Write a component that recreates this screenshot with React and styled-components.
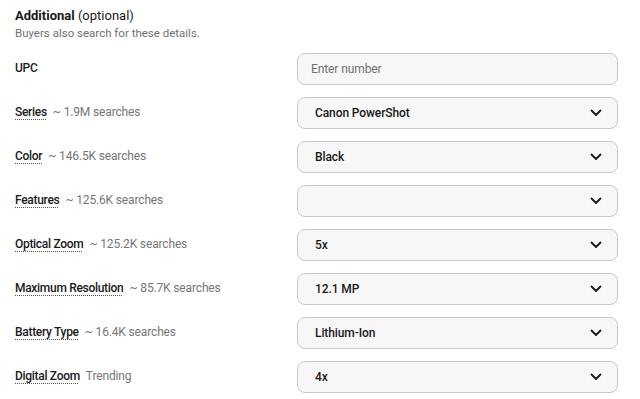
import React from "react";
import styled, { createGlobalStyle } from "styled-components";

const Global = createGlobalStyle`
  html, body { margin: 0; padding: 0; background: #fff; }
  body { font-family: Roboto, Inter, "Liberation Sans", sans-serif; color: #191919; }
`;

const Page = styled.div`
  width: 640px;
  padding: 8px 22px 0 15px;
  box-sizing: border-box;
`;

const Title = styled.h2`
  margin: 0;
  font-size: 13px;
  line-height: 16px;
  font-weight: 700;
  color: #191919;
  span { font-weight: 400; }
`;

const Subtitle = styled.p`
  margin: 2px 0 0;
  font-size: 11.5px;
  line-height: 14px;
  color: #707070;
`;

const List = styled.div`
  margin-top: 13px;
  display: flex;
  flex-direction: column;
  gap: 12px;
`;

const Row = styled.div`
  display: grid;
  grid-template-columns: 1fr 321px;
  align-items: center;
`;

const LabelWrap = styled.div`
  display: flex;
  align-items: baseline;
  gap: 6px;
  margin-top: -2px;
`;

const Label = styled.span`
  font-size: 12px;
  font-weight: 500;
  letter-spacing: -0.3px;
  color: #191919;
  text-decoration: ${(p) => (p.$dotted ? "underline dotted #555" : "none")};
  text-underline-offset: 3px;
  text-decoration-thickness: 1px;
`;

const Meta = styled.span`
  font-size: 12px;
  color: #767676;
  letter-spacing: -0.15px;
`;

const Field = styled.div`
  height: 32px;
  box-sizing: border-box;
  border: 1px solid #c8c8c8;
  border-radius: 8px;
  background: #f7f7f7;
  display: flex;
  align-items: center;
  justify-content: space-between;
  padding: 0 15px 0 ${(p) => (p.$input ? "13px" : "17px")};
  font-size: 12px;
  font-weight: 500;
  letter-spacing: -0.1px;
  color: ${(p) => (p.$placeholder ? "#707070" : "#191919")};
  ${(p) => p.$placeholder && "font-weight: 400;"}
`;

const Chevron = () => (
  <svg width="12" height="8" viewBox="0 0 12 8" fill="none">
    <path d="M1.5 1.5 L6 6 L10.5 1.5" stroke="#191919" strokeWidth="1.8" strokeLinecap="round" strokeLinejoin="round" />
  </svg>
);

const rows = [
  { label: "Series", meta: "~ 1.9M searches", value: "Canon PowerShot" },
  { label: "Color", meta: "~ 146.5K searches", value: "Black" },
  { label: "Features", meta: "~ 125.6K searches", value: "" },
  { label: "Optical Zoom", meta: "~ 125.2K searches", value: "5x" },
  { label: "Maximum Resolution", meta: "~ 85.7K searches", value: "12.1 MP" },
  { label: "Battery Type", meta: "~ 16.4K searches", value: "Lithium-Ion" },
  { label: "Digital Zoom", meta: "Trending", value: "4x" },
];

export default function App() {
  return (
    <>
      <Global />
      <Page>
        <Title>
          Additional <span>(optional)</span>
        </Title>
        <Subtitle>Buyers also search for these details.</Subtitle>
        <List>
          <Row>
            <LabelWrap>
              <Label>UPC</Label>
            </LabelWrap>
            <Field $input $placeholder>Enter number</Field>
          </Row>
          {rows.map((r) => (
            <Row key={r.label}>
              <LabelWrap>
                <Label $dotted>{r.label}</Label>
                <Meta>{r.meta}</Meta>
              </LabelWrap>
              <Field>
                <span>{r.value}</span>
                <Chevron />
              </Field>
            </Row>
          ))}
        </List>
      </Page>
    </>
  );
}
